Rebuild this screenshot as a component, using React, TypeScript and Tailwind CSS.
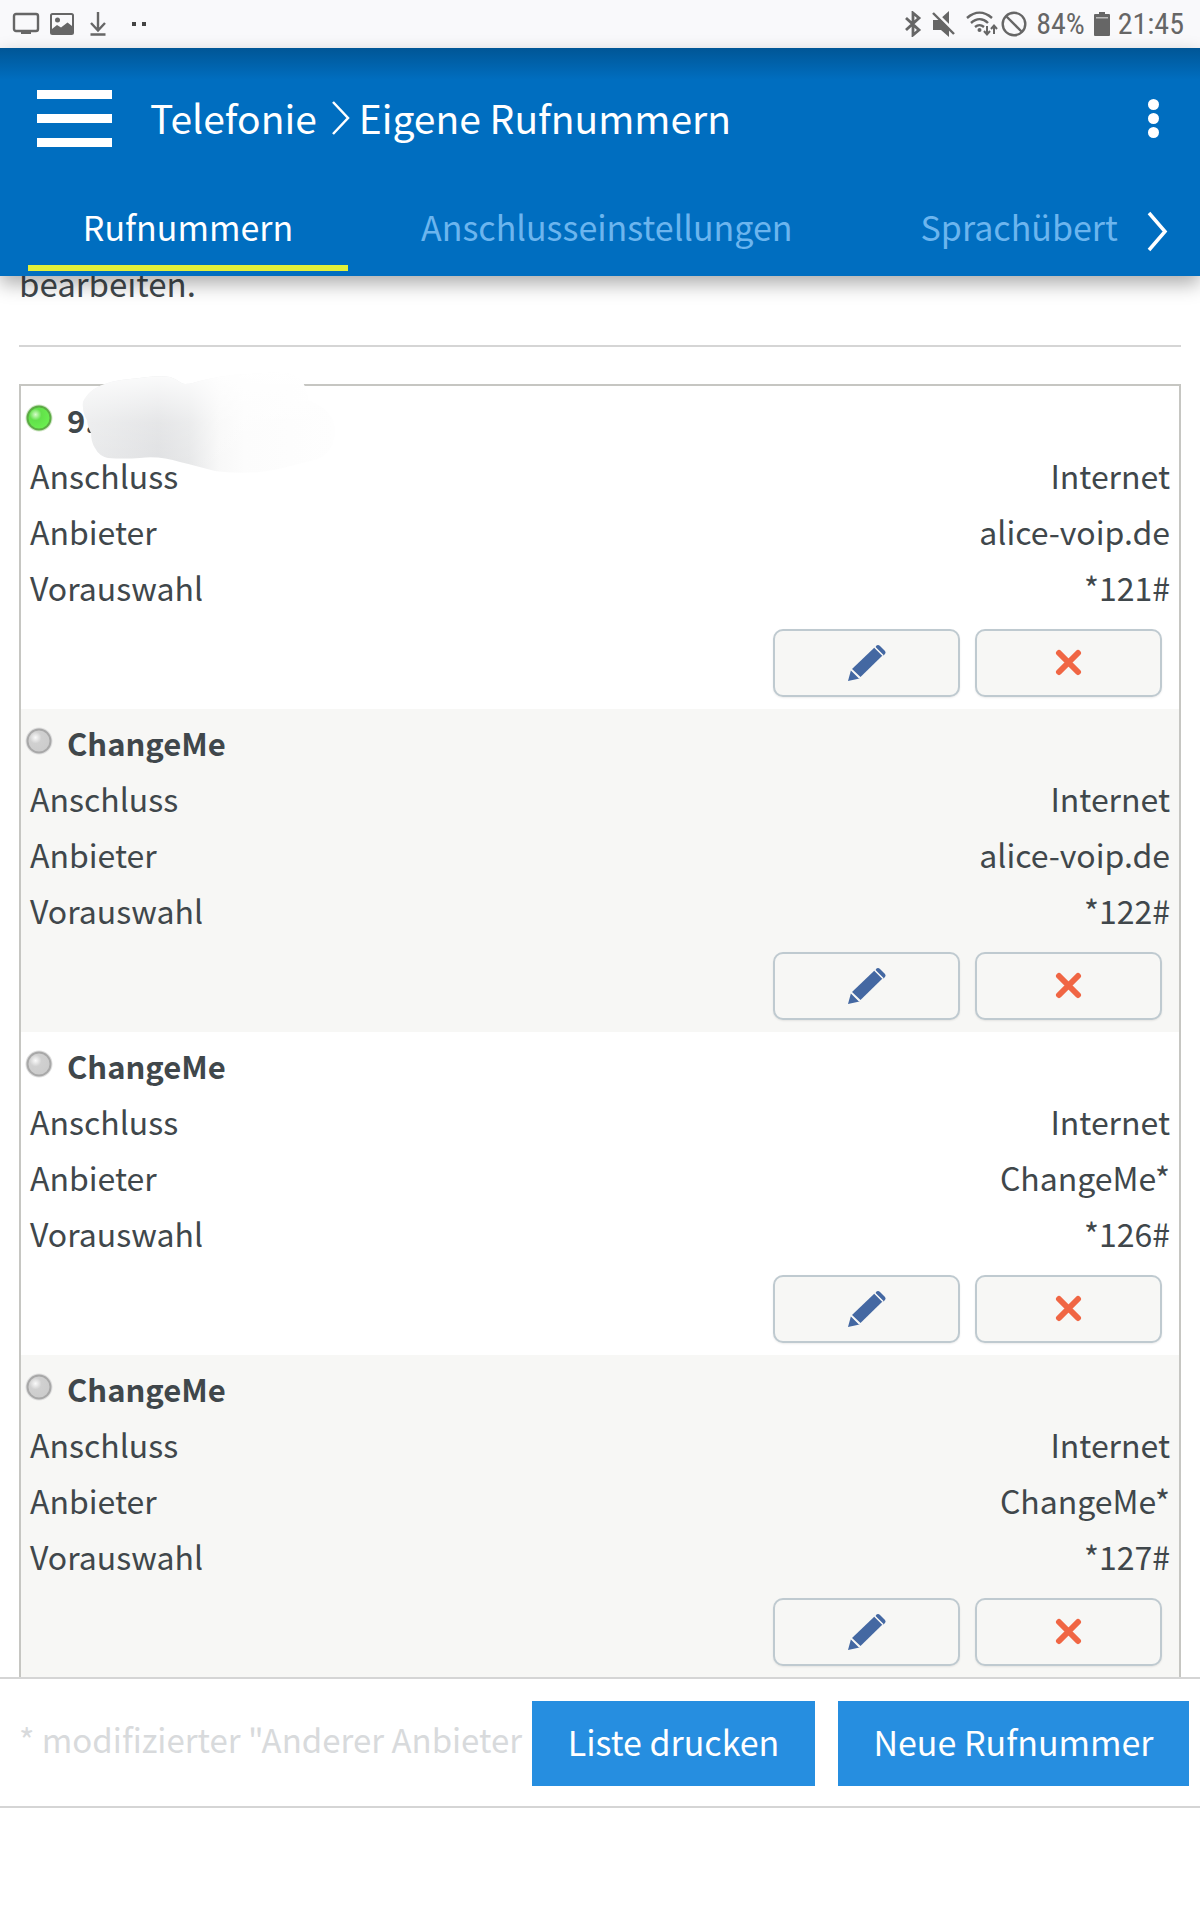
type PhoneNumber = {
  id: number;
  name: string;
  active?: boolean;
  redacted?: boolean;
  provider: string;
  prefix: string;
};

const numbers: PhoneNumber[] = [
  { id: 1, name: "9.", active: true, redacted: true, provider: "alice-voip.de", prefix: "*121#" },
  { id: 2, name: "ChangeMe", provider: "alice-voip.de", prefix: "*122#" },
  { id: 3, name: "ChangeMe", provider: "ChangeMe*", prefix: "*126#" },
  { id: 4, name: "ChangeMe", provider: "ChangeMe*", prefix: "*127#" },
];

function StatusBar() {
  return (
    <div className="flex h-12 shrink-0 items-center justify-between bg-[#f9f9fb] pr-4 pl-3 text-[#666666]">
      <div className="flex items-center">
        <svg width="28" height="24" viewBox="0 0 28 24" fill="none" aria-hidden="true">
          <rect x="2" y="2" width="24" height="17" rx="2" stroke="currentColor" strokeWidth="2.4" />
          <path d="M9 19h10v3H9z" fill="currentColor" />
        </svg>
        <svg className="ml-2.5" width="24" height="24" viewBox="0 0 24 24" fill="none" aria-hidden="true">
          <rect x="1" y="2" width="22" height="20" rx="1.5" stroke="currentColor" strokeWidth="2" />
          <path d="M2 17l5-4 4 2.5 6.500-5L22 14v8H2z" fill="currentColor" />
          <circle cx="7.500" cy="8" r="2.500" fill="currentColor" />
        </svg>
        <svg className="ml-4" width="16" height="24" viewBox="0 0 16 24" fill="none" stroke="currentColor" strokeWidth="2.400" aria-hidden="true">
          <path d="M8 0v18M1 11l7 7.500 7-7.500M.5 22.500h15" />
        </svg>
        <svg className="ml-6" width="16" height="24" viewBox="0 0 16 24" fill="#444" aria-hidden="true">
          <path d="M2 10h4v4H2zM12 10h4v4h-4z" />
        </svg>
      </div>

      <div className="flex items-center font-['Roboto_Condensed','Liberation_Sans_Narrow',Roboto,sans-serif] text-[30px] leading-12">
        <svg width="18" height="26" viewBox="0 0 18 26" fill="none" stroke="currentColor" strokeWidth="2.800" aria-hidden="true">
          <path d="M2 7l13 12-6 5V2l6 5L2 19" />
        </svg>
        <svg className="ml-2.5" width="24" height="26" viewBox="0 0 24 26" aria-hidden="true">
          <path d="M1 9h6l10-9v26l-8-7H1z" fill="currentColor" />
          <path d="M2 0l23 23" stroke="#f9f9fb" strokeWidth="3" />
          <path d="M1 2l21 21" stroke="currentColor" strokeWidth="2.400" />
        </svg>
        <svg className="ml-2.5" width="32" height="26" viewBox="0 0 32 26" fill="none" stroke="currentColor" strokeWidth="2.400" aria-hidden="true">
          <path d="M1 7c8-7 17-7 25 0M5 12c5.500-5 12-5 17 0M9 16c3-2.500 6-2.500 9 0" />
          <circle cx="13.500" cy="19" r="2" fill="currentColor" stroke="none" />
          <path d="M21 15v8M18 20l3 3.500 3-3.500M28 23v-8M25 18l3-3.500 3 3.500" strokeWidth="2" />
        </svg>
        <svg className="ml-[3px]" width="26" height="26" viewBox="0 0 26 26" fill="none" stroke="currentColor" strokeWidth="2.400" aria-hidden="true">
          <circle cx="13" cy="13" r="11.300" />
          <path d="M5 5l16 16" />
        </svg>
        <span className="ml-[9px]">84%</span>
        <svg className="ml-[9px]" width="16" height="24" viewBox="0 0 16 24" aria-hidden="true">
          <path d="M5 0h6v2h4q1 0 1 1v20q0 1-1 1H1q-1 0-1-1V3q0-1 1-1h4z" fill="currentColor" />
          <path d="M2 5h12v1.500H2z" fill="#bbb" />
        </svg>
        <span className="ml-2">21:45</span>
      </div>
    </div>
  );
}

function Header() {
  return (
    <header className="relative z-10 shrink-0 bg-[#006ec0] bg-linear-to-b from-[#005696] to-[#006ec0] to-[32px] text-white shadow-[0_8px_18px_rgba(0,0,0,0.32)]">
      <div className="flex h-[140px] items-center pr-[39px] pl-[37px]">
        <button type="button" aria-label="Menü" className="flex w-[75px] flex-col gap-[15px]">
          <span className="h-[9px] w-full bg-white" />
          <span className="h-[9px] w-full bg-white" />
          <span className="h-[9px] w-full bg-white" />
        </button>
        <h1 className="ml-[38px] flex flex-1 items-center pb-0.5 text-[39px] leading-[60px]">
          Telefonie
          <svg className="mr-2 ml-3.5" width="20" height="36" viewBox="0 0 20 36" fill="none" stroke="currentColor" strokeWidth="2.500" aria-hidden="true">
            <path d="M2 3l15 16L2 35" />
          </svg>
          Eigene Rufnummern
        </h1>
        <button type="button" aria-label="Weitere Optionen" className="flex flex-col gap-[3px] px-0.5">
          <span className="size-[11px] rounded-full bg-white" />
          <span className="size-[11px] rounded-full bg-white" />
          <span className="size-[11px] rounded-full bg-white" />
        </button>
      </div>
      <div className="flex h-[88px] items-start pr-[31px] pl-7">
        <nav className="flex min-w-0 flex-1 gap-[18px] overflow-hidden text-[34px] leading-[60px] whitespace-nowrap">
          <a href="#rufnummern" className="h-[83px] w-80 shrink-0 border-b-6 border-[#e2f03a] pt-[9px] text-center">
            Rufnummern
          </a>
          <a href="#anschluss" className="h-[83px] shrink-0 px-[55px] pt-[9px] text-[#6cb5ee]">
            Anschlusseinstellungen
          </a>
          <a href="#sprache" className="h-[83px] shrink-0 pt-[9px] pl-[55px] text-[#6cb5ee]">
            Sprachübert
          </a>
        </nav>
        <button type="button" aria-label="Weitere Reiter" className="pt-5">
          <svg width="22" height="48" viewBox="0 0 22 48" fill="none" stroke="currentColor" strokeWidth="3.500" aria-hidden="true">
            <path d="M2 5l16 18.500L2 42" />
          </svg>
        </button>
      </div>
    </header>
  );
}

function StatusLed({ active }: { active?: boolean }) {
  return (
    <svg width="28" height="28" viewBox="0 0 28 28" role="img" aria-label={active ? "aktiv" : "inaktiv"}>
      <defs>
        <radialGradient id={active ? "led-on" : "led-off"} cx="0.35" cy="0.35" r="0.65">
          <stop offset="0" stopColor={active ? "#d6fcca" : "#fafafa"} />
          <stop offset="0.4" stopColor={active ? "#62e14a" : "#d0d0d0"} />
          <stop offset="1" stopColor={active ? "#6aef50" : "#cccccc"} />
        </radialGradient>
      </defs>
      <circle cx="14" cy="14" r="13.500" fill={active ? "#cfe5c5" : "#dedede"} />
      <circle cx="14" cy="14" r="11.500" fill={active ? "url(#led-on)" : "url(#led-off)"} stroke={active ? "#5cab45" : "#a8a8a8"} strokeWidth="2" />
    </svg>
  );
}

const smearPath =
  "M4 32C8 24 14 18 26 14C34 11 42 10 51 9C65 8 78 5 91 7C98 9 102 14 106 14C112 14 116 12 121 11C138 7 154 4 171 4C185 3 200 2 211 4C220 8 225 12 226 18Q229 24 229 30C237 34 247 38 251 45Q256 52 256 60C256 76 248 89 231 91C214 95 200 100 181 102C166 103 150 103 136 101C124 98 114 95 101 92C88 88 74 86 61 88Q44 89 29 88Q20 86 16 78Q12 72 12 63Q9 58 8 50Q3 42 4 32Z";

// Smear painted over the private number
function Smudge() {
  return (
    <svg className="absolute -top-4 left-[58px]" width="264" height="112" viewBox="0 0 264 112" aria-hidden="true">
      <defs>
        <linearGradient id="smudge" x1="0" x2="1" y1="0" y2="0">
          <stop offset="0" stopColor="#e9eaeb" />
          <stop offset="0.3" stopColor="#dfe0e2" />
          <stop offset="0.42" stopColor="#e6e7e8" />
          <stop offset="0.54" stopColor="#f8f8f8" />
          <stop offset="0.64" stopColor="#fcfcfc" />
          <stop offset="1" stopColor="#fefefe" />
        </linearGradient>
        <linearGradient id="smudge-light" x1="0" x2="0" y1="0" y2="1">
          <stop offset="0" stopColor="#fff" stopOpacity="0.9" />
          <stop offset="0.5" stopColor="#fff" stopOpacity="0.2" />
          <stop offset="1" stopColor="#fff" stopOpacity="0" />
        </linearGradient>
      </defs>
      <path d={smearPath} fill="url(#smudge)" />
      <path d={smearPath} fill="url(#smudge-light)" />
    </svg>
  );
}

function NumberRow({ name, active, redacted, provider, prefix }: PhoneNumber) {
  const details = [
    { label: "Anschluss", value: "Internet" },
    { label: "Anbieter", value: provider },
    { label: "Vorauswahl", value: prefix },
  ];

  return (
    <li className="relative pt-[5px] pb-3 even:bg-[#f7f7f5]">
      <h2 className="flex h-14 items-start pl-1 text-[31px] font-semibold">
        <span className="flex pt-[13px]">
          <StatusLed active={active} />
        </span>
        <span className="ml-3.5 pt-px">{name}</span>
      </h2>
      {redacted && <Smudge />}
      <dl className="relative pr-[9px] pl-[9px]">
        {details.map((d) => (
          <div key={d.label} className="flex justify-between">
            <dt>{d.label}</dt>
            <dd>{d.value}</dd>
          </div>
        ))}
      </dl>
      <div className="mt-3.5 flex justify-end gap-[15px] pr-[17px]">
        <button type="button" aria-label="Bearbeiten" className="flex h-[68px] w-[187px] items-center justify-center rounded-[10px] border-2 border-[#bfcad0] bg-[#f7f7f5] shadow-[0_1px_2px_rgba(0,0,0,0.08)]">
          <svg width="38" height="38" viewBox="0 0 38 38" fill="#4468a2" aria-hidden="true">
            <path d="M27 3l8 8L12.500 33L4 25z" />
            <path d="M28 2q2-2 4 0l4.500 4.500q2 2 0 4l-1 1-8-8z" />
            <path d="M3 26l8.500 8.500L0 37z" />
            <path d="M26.500 3l8.500 8.500M3 25.500l8.500 8.500" stroke="#f7f7f5" strokeWidth="1.600" />
          </svg>
        </button>
        <button type="button" aria-label="Löschen" className="flex h-[68px] w-[187px] items-center justify-center rounded-[10px] border-2 border-[#bfcad0] bg-[#f7f7f5] shadow-[0_1px_2px_rgba(0,0,0,0.08)]">
          <svg width="28" height="28" viewBox="0 0 28 28" fill="none" stroke="#f06644" strokeWidth="6" strokeLinecap="round" aria-hidden="true">
            <path d="M4 4l19 19M23 4L4 23" />
          </svg>
        </button>
      </div>
    </li>
  );
}

export default function App() {
  return (
    <div className="flex h-screen flex-col bg-white font-['Noto_Sans_CJK_JP','Noto_Sans',sans-serif] text-[32px] leading-14 text-[#40474b]">
      <StatusBar />
      <Header />
      <main className="min-h-0 flex-1 overflow-hidden px-[19px]">
        <p className="-mt-[21px] text-[33px]">bearbeiten.</p>
        <hr className="mt-[34px] border-t-2 border-[#d5d5d5]" />
        <ul className="mt-[37px] border-2 border-[#c6c6c2]">
          {numbers.map((n) => (
            <NumberRow key={n.id} {...n} />
          ))}
        </ul>
      </main>
      <footer className="mb-28 flex shrink-0 items-start border-y-2 border-[#d5d5d5] pt-[22px] pr-[11px] pb-5 pl-[19px]">
        <p className="min-w-0 flex-1 overflow-hidden pt-2.5 text-[33px] whitespace-nowrap text-[#d8dadc]">* modifizierter "Anderer Anbieter</p>
        <button type="button" className="h-[85px] w-[283px] bg-[#268ee0] pb-1 text-[34px] text-white">
          Liste drucken
        </button>
        <button type="button" className="ml-[23px] h-[85px] w-[351px] bg-[#268ee0] pb-1 text-[34px] text-white">
          Neue Rufnummer
        </button>
      </footer>
    </div>
  );
}
